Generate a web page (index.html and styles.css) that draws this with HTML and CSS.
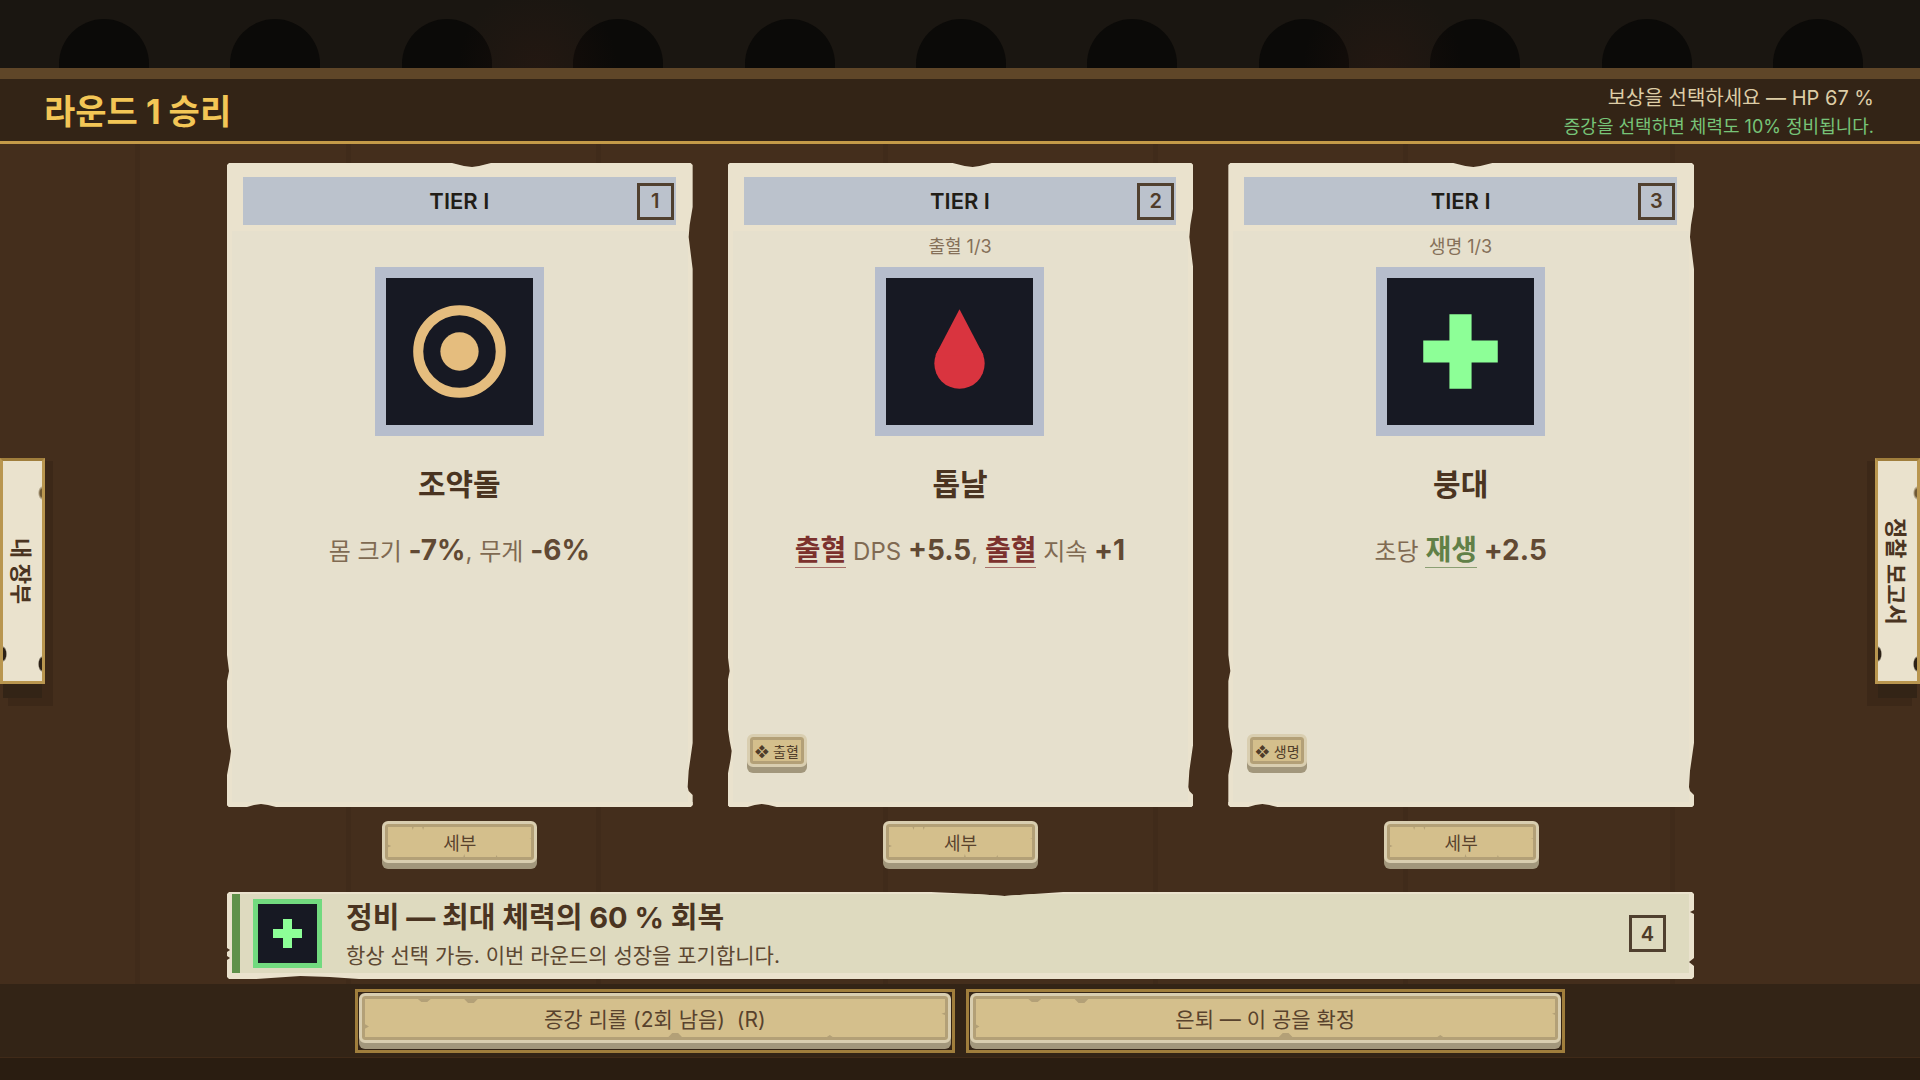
FILE: index.html
```html
<!DOCTYPE html>
<html lang="ko">
<head>
  <meta charset="UTF-8">
  <meta name="viewport" content="width=device-width, initial-scale=1.0">
  <title>라운드 1 승리</title>
  <link rel="stylesheet" href="styles.css">
</head>
<body>

  <div class="arcade">
    <span class="arch"></span><span class="arch"></span><span class="arch"></span>
    <span class="arch"></span><span class="arch"></span><span class="arch"></span>
    <span class="arch"></span><span class="arch"></span><span class="arch"></span>
    <span class="arch"></span><span class="arch"></span>
  </div>

  <header class="topbar">
    <h1>라운드 1 승리</h1>
    <div class="status">
      <p class="status-main">보상을 선택하세요 — HP 67 %</p>
      <p class="status-heal">증강을 선택하면 체력도 10% 정비됩니다.</p>
    </div>
  </header>

  <main class="board">
    <div class="planks">
      <span></span><span></span><span></span><span></span>
      <span></span><span></span><span></span><span></span>
    </div>

    <div class="cards">
      <div class="choice">
        <article class="card">
          <div class="tier">TIER I <kbd class="key">1</kbd></div>
          <p class="set"></p>
          <div class="frame">
            <svg viewBox="0 0 146 146">
              <circle cx="73" cy="73" r="41" fill="none" stroke="#e5bd7e" stroke-width="10"/>
              <circle cx="73" cy="73" r="19" fill="#e5bd7e"/>
            </svg>
          </div>
          <h2>조약돌</h2>
          <p class="effect">몸 크기 <b>-7%</b>, 무게 <b>-6%</b></p>
        </article>
        <button class="tile small-tile">세부</button>
      </div>

      <div class="choice">
        <article class="card">
          <div class="tier">TIER I <kbd class="key">2</kbd></div>
          <p class="set">출혈 1/3</p>
          <div class="frame">
            <svg viewBox="0 0 146 146">
              <circle cx="73" cy="85" r="25" fill="#d9343f"/>
              <path d="M73 31 L97 77 H49 Z" fill="#d9343f"/>
            </svg>
          </div>
          <h2>톱날</h2>
          <p class="effect"><b class="bleed">출혈</b> DPS <b>+5.5</b>, <b class="bleed">출혈</b> 지속 <b>+1</b></p>
          <span class="tile tag">❖ 출혈</span>
        </article>
        <button class="tile small-tile">세부</button>
      </div>

      <div class="choice">
        <article class="card">
          <div class="tier">TIER I <kbd class="key">3</kbd></div>
          <p class="set">생명 1/3</p>
          <div class="frame">
            <svg viewBox="0 0 146 146">
              <path d="M62 36h22v26h26v22H84v26H62V84H36V62h26z" fill="#8dff97"/>
            </svg>
          </div>
          <h2>붕대</h2>
          <p class="effect">초당 <b class="regen">재생</b> <b>+2.5</b></p>
          <span class="tile tag">❖ 생명</span>
        </article>
        <button class="tile small-tile">세부</button>
      </div>
    </div>

    <section class="repair">
      <div class="repair-body">
        <div class="repair-icon">
          <svg viewBox="0 0 59 59">
            <path d="M25 15h9v10h10v9H34v10h-9V34H15v-9h10z" fill="#8dff97"/>
          </svg>
        </div>
        <div class="repair-text">
          <h2>정비 — 최대 체력의 60 % 회복</h2>
          <p>항상 선택 가능. 이번 라운드의 성장을 포기합니다.</p>
        </div>
        <kbd class="key">4</kbd>
      </div>
    </section>
  </main>

  <footer class="actions">
    <div class="action"><button class="tile wide-tile">증강 리롤 (2회 남음)&nbsp; (R)</button></div>
    <div class="action"><button class="tile wide-tile">은퇴 — 이 공을 확정</button></div>
  </footer>

  <button class="side-tab side-left">내 장부</button>
  <button class="side-tab side-right">정찰 보고서</button>

</body>
</html>
```
FILE: styles.css
```css
* {
  box-sizing: border-box;
}

body {
  margin: 0;
  min-height: 100vh;
  display: flex;
  flex-direction: column;
  position: relative;
  overflow-x: hidden;
  background-color: #2a1d11;
  color: #4a3421;
  font-family: Inter, "Noto Sans CJK KR", sans-serif;
}

h1, h2, p {
  margin: 0;
}

button {
  font-family: inherit;
  cursor: pointer;
}

/* Arches above the stage */
.arcade {
  height: 68px;
  padding: 19px 57px 0 59px;
  display: flex;
  justify-content: space-between;
  overflow: hidden;
  position: relative;
  background-color: #1a1611;
}

.arcade::after {
  content: "";
  position: absolute;
  inset: 0;
  background:
    radial-gradient(circle at 28% 100%, rgba(70, 30, 18, 0.2), transparent 80px),
    radial-gradient(circle at 72% 100%, rgba(70, 30, 18, 0.2), transparent 80px);
}

.arch {
  width: 90px;
  height: 70px;
  border-radius: 45px 45px 0 0;
  background-color: #0b0a08;
}

/* Title bar */
.topbar {
  height: 76px;
  padding: 4px 46px 0 44px;
  display: flex;
  justify-content: space-between;
  align-items: center;
  background-color: #332416;
  border-top: 11px solid #5f4628;
  border-bottom: 3px solid #c49a48;
}

.topbar h1 {
  font-size: 34px;
  line-height: 40px;
  color: #f3c656;
}

.status {
  text-align: right;
}

.status-main {
  font-size: 20px;
  line-height: 30px;
  color: #ddcda6;
}

.status-heal {
  font-size: 18px;
  line-height: 28px;
  color: #77c478;
}

/* Wooden board */
.board {
  flex: 1;
  padding: 19px 226px 5px 227px;
  display: flex;
  flex-direction: column;
  gap: 23px;
  position: relative;
  background-color: #442e1c;
}

.planks {
  position: absolute;
  inset: 0;
  display: flex;
}

.planks span {
  flex: 250;
  border-right: 5px solid #402b1a;
}

.planks span:nth-child(1) { flex: 138; }
.planks span:nth-child(2) { flex: 210; }
.planks span:nth-child(4) { flex: 287; }
.planks span:nth-child(5) { flex: 270; }
.planks span:nth-child(7) { flex: 267; }
.planks span:last-child { border: none; }

.cards {
  flex: 1;
  display: grid;
  grid-template-columns: repeat(3, 1fr);
  gap: 35px;
  position: relative;
}

.choice {
  display: flex;
  flex-direction: column;
  align-items: center;
  gap: 14px;
}

.card {
  flex: 1;
  width: 100%;
  padding: 14px 12px 34px 11px;
  display: flex;
  flex-direction: column;
  align-items: center;
  border: solid #eae2cd;
  border-width: 0 5px 5px;
  background: linear-gradient(#eae2cd 68px, #e6e0cd 68px);
  /* torn paper edge */
  clip-path: polygon(
    0 2px, 2px 0, 225px 0, 237px 3px, 245px 4px, 252px 3px, 264px 0,
    calc(100% - 2px) 0, 100% 2px,
    100% 44px, calc(100% - 3px) 62px, calc(100% - 4px) 74px, calc(100% - 2px) 90px, 100% 106px,
    100% calc(100% - 64px), calc(100% - 4px) calc(100% - 36px), calc(100% - 5px) calc(100% - 20px),
    calc(100% - 4px) calc(100% - 16px), 100% calc(100% - 12px), 100% calc(100% - 2px),
    calc(100% - 2px) 100%, 49px 100%, 41px calc(100% - 2px), 34px calc(100% - 3px),
    27px calc(100% - 2px), 20px 100%, 2px 100%, 0 calc(100% - 2px),
    0 calc(100% - 32px), 3px calc(100% - 48px), 4px calc(100% - 56px), 2px calc(100% - 66px),
    0 calc(100% - 80px), 0 calc(100% - 126px), 2px calc(100% - 136px), 0 calc(100% - 152px)
  );
}

.tier {
  width: 100%;
  height: 48px;
  flex: none;
  display: flex;
  justify-content: center;
  align-items: center;
  position: relative;
  background-color: #bbc2cc;
  color: #211d17;
  font-size: 22px;
  font-weight: 600;
}

.key {
  width: 37px;
  height: 37px;
  display: flex;
  justify-content: center;
  align-items: center;
  border: 3px solid #50402f;
  color: #4f3c29;
  font-family: inherit;
  font-size: 20px;
  font-weight: 600;
}

.tier .key {
  position: absolute;
  right: 2px;
}

.set {
  height: 42px;
  line-height: 44px;
  font-size: 18px;
  color: #857059;
}

.frame {
  width: 169px;
  height: 169px;
  border: 11px solid #b6bdcc;
  background-color: #171923;
}

.frame svg, .repair-icon svg {
  display: block;
  width: 100%;
  height: 100%;
}

.card h2 {
  margin-top: 26px;
  font-size: 30px;
  line-height: 44px;
}

.effect {
  margin-top: 22px;
  font-size: 24px;
  line-height: 44px;
  color: #806a52;
}

.effect b {
  font-size: 28px;
  color: #614933;
}

.effect .bleed {
  color: #7b312d;
  border-bottom: 1px solid #a8716a;
}

.effect .regen {
  color: #618047;
  border-bottom: 1px solid #8b9f73;
}

/* Carved tiles: light rim, dark groove, thick bottom lip */
.tile {
  position: relative;
  display: flex;
  justify-content: center;
  align-items: center;
  padding: 0;
  border: 3px solid #d9ceb0;
  border-radius: 6px;
  background-color: #d4bf8c;
  box-shadow: inset 0 0 0 3px #b3a077, 0 6px 0 #a2977c;
  color: #58422d;
}

/* chips along the groove: the full box minus the box with dents */
.tile::after {
  content: "";
  position: absolute;
  inset: 1px;
  background-color: #b3a077;
  clip-path: polygon(
    evenodd,
    0 0, 100% 0, 100% 100%, 0 100%, 0 0,
    17% 0, 18% 5px, 19% 0, 24% 0, 25% 5px, 26% 0, 100% 0,
    100% 38%, calc(100% - 4px) 40%, 100% 42%, 100% 100%,
    76% 100%, 75% calc(100% - 4px), 74% 100%, 54% 100%, 53% calc(100% - 5px), 52% 100%,
    0 100%, 0 68%, 5px 62%, 0 56%, 0 0
  );
}

.small-tile {
  width: 155px;
  height: 42px;
  margin-bottom: 6px;
  font-size: 18px;
}

.tag {
  align-self: flex-start;
  margin-top: auto;
  margin-left: 3px;
  margin-bottom: 1px;
  width: 60px;
  height: 33px;
  color: #4f3c29;
  font-size: 14px;
}

.tag::after {
  display: none;
}

/* Repair option */
.repair {
  height: 87px;
  padding: 2px 5px 6px;
  position: relative;
  background-color: #eae2cd;
  clip-path: polygon(
    0 2px, 2px 0, 48% 0, 51% 2px, 53% 4px, 55% 2px, 57% 0, calc(100% - 2px) 0, 100% 2px,
    100% 18px, calc(100% - 4px) 20px, 100% 22px, 100% 66px, calc(100% - 5px) 70px, 100% 74px,
    100% calc(100% - 2px), calc(100% - 2px) 100%, 9% 100%, 7% calc(100% - 2px), 5% calc(100% - 3px), 2% 100%,
    2px 100%, 0 calc(100% - 2px), 0 68px, 3px 66px, 0 64px, 0 60px, 3px 58px, 0 56px
  );
}

.repair-body {
  height: 100%;
  padding: 0 23px 0 13px;
  display: flex;
  align-items: center;
  background-color: #dedabf;
  border-left: 8px solid #5f914a;
}

.repair-icon {
  width: 69px;
  height: 69px;
  border: 5px solid #72da7f;
  background-color: #171923;
}

.repair-text {
  flex: 1;
  margin-left: 24px;
  padding-top: 3px;
}

.repair-text h2 {
  font-size: 29px;
  line-height: 42px;
}

.repair-text p {
  font-size: 21px;
  line-height: 34px;
  color: #5c4731;
}

/* Bottom actions */
.actions {
  margin-bottom: 22px;
  padding: 5px 355px 4px;
  display: grid;
  grid-template-columns: 1fr 1fr;
  gap: 11px;
  background-color: #332416;
  border-bottom: 1px solid #402a18;
}

.action {
  height: 64px;
  padding: 1px;
  border: 3px solid #a07e3c;
}

.wide-tile {
  width: 100%;
  height: 50px;
  font-size: 21px;
}

.wide-tile::after {
  clip-path: polygon(
    evenodd,
    0 0, 100% 0, 100% 100%, 0 100%, 0 0,
    9% 0, 10% 5px, 11% 5px, 12% 0, 17% 0, 18% 6px, 19% 6px, 20% 0, 100% 0,
    100% 36%, calc(100% - 5px) 40%, 100% 44%, 100% 100%,
    81% 100%, 80% calc(100% - 4px), 79% 100%, 55% 100%, 54% calc(100% - 6px), 53% calc(100% - 6px), 52% 100%,
    0 100%, 0 78%, 6px 70%, 0 62%, 0 0
  );
}

/* Drawer tabs pinned to both sides */
.side-tab {
  position: absolute;
  top: 458px;
  width: 45px;
  height: 226px;
  padding: 0;
  border: 3px solid #b9964f;
  border-top-color: #a07e3c;
  background:
    radial-gradient(4px 7px at 100% 32px, #6e5833 50%, transparent),
    radial-gradient(4px 8px at 100% 203px, #2c2116 70%, transparent),
    radial-gradient(4px 8px at 0 193px, #2c2116 70%, transparent),
    #eae2cd;
  color: #4a3421;
  font-size: 22px;
  font-weight: 600;
  writing-mode: vertical-rl;
  text-orientation: sideways;
}

.side-left {
  left: 0;
  box-shadow: 0 17px 0 -3px #332416, 8px 3px 0 #3c2818, 8px 22px 0 #3c2818;
}

.side-right {
  right: 0;
  box-shadow: 0 17px 0 -3px #332416, -8px 3px 0 #3c2818, -8px 22px 0 #3c2818;
}
```
